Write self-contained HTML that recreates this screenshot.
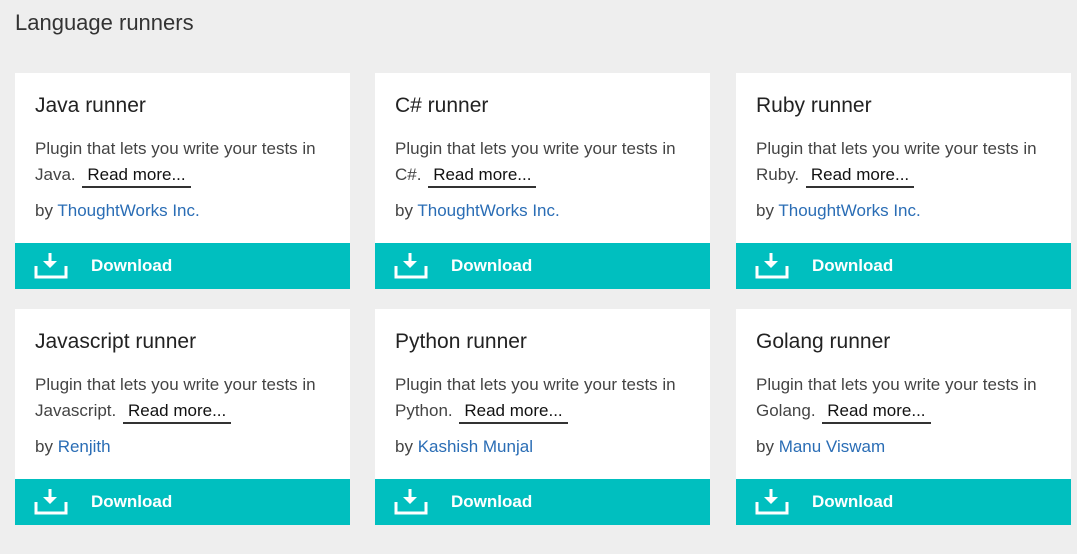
<!DOCTYPE html>
<html><head><style>
body{margin:0;background:#eeeeee;font-family:"Liberation Sans",sans-serif;width:1077px;height:554px;position:relative;overflow:hidden}
h1{position:absolute;left:15px;top:10px;margin:0;font-weight:normal;font-size:22px;color:#333}
.card{position:absolute;width:335px;height:216px;background:#fff}
.card h2{position:absolute;left:20px;top:21px;margin:0;font-weight:normal;font-size:21px;color:#222}
.card p{position:absolute;left:20px;top:63px;margin:0;font-size:17px;line-height:26px;color:#444;width:295px}
.card p a{color:#111;border-bottom:2px solid #333;padding:0 5px 2px;margin-left:2px}
.card .by{position:absolute;left:20px;top:128px;font-size:17px;color:#444}
.by span{color:#2a6db5}
.dl{position:absolute;left:0;bottom:0;width:335px;height:46px;background:#00bfbf;color:#fff;font-weight:bold;font-size:17px}
.dl svg{position:absolute;left:19px;top:8px}
.dl b{position:absolute;left:76px;top:13px}
</style></head><body>
<h1>Language runners</h1>

<div class="card" style="left:15px;top:73px"><h2>Java runner</h2><p>Plugin that lets you write your tests in Java. <a>Read more...</a></p><div class="by">by <span>ThoughtWorks Inc.</span></div><div class="dl"><svg width="36" height="30"><path d="M2 15V26H32V15" fill="none" stroke="#fff" stroke-width="3"/><path d="M16 2V11" stroke="#fff" stroke-width="3"/><path d="M9 10H23L16 17Z" fill="#fff"/></svg><b>Download</b></div></div>

<div class="card" style="left:375px;top:73px"><h2>C# runner</h2><p>Plugin that lets you write your tests in C#. <a>Read more...</a></p><div class="by">by <span>ThoughtWorks Inc.</span></div><div class="dl"><svg width="36" height="30"><path d="M2 15V26H32V15" fill="none" stroke="#fff" stroke-width="3"/><path d="M16 2V11" stroke="#fff" stroke-width="3"/><path d="M9 10H23L16 17Z" fill="#fff"/></svg><b>Download</b></div></div>

<div class="card" style="left:736px;top:73px"><h2>Ruby runner</h2><p>Plugin that lets you write your tests in Ruby. <a>Read more...</a></p><div class="by">by <span>ThoughtWorks Inc.</span></div><div class="dl"><svg width="36" height="30"><path d="M2 15V26H32V15" fill="none" stroke="#fff" stroke-width="3"/><path d="M16 2V11" stroke="#fff" stroke-width="3"/><path d="M9 10H23L16 17Z" fill="#fff"/></svg><b>Download</b></div></div>

<div class="card" style="left:15px;top:309px"><h2>Javascript runner</h2><p>Plugin that lets you write your tests in Javascript. <a>Read more...</a></p><div class="by">by <span>Renjith</span></div><div class="dl"><svg width="36" height="30"><path d="M2 15V26H32V15" fill="none" stroke="#fff" stroke-width="3"/><path d="M16 2V11" stroke="#fff" stroke-width="3"/><path d="M9 10H23L16 17Z" fill="#fff"/></svg><b>Download</b></div></div>

<div class="card" style="left:375px;top:309px"><h2>Python runner</h2><p>Plugin that lets you write your tests in Python. <a>Read more...</a></p><div class="by">by <span>Kashish Munjal</span></div><div class="dl"><svg width="36" height="30"><path d="M2 15V26H32V15" fill="none" stroke="#fff" stroke-width="3"/><path d="M16 2V11" stroke="#fff" stroke-width="3"/><path d="M9 10H23L16 17Z" fill="#fff"/></svg><b>Download</b></div></div>

<div class="card" style="left:736px;top:309px"><h2>Golang runner</h2><p>Plugin that lets you write your tests in Golang. <a>Read more...</a></p><div class="by">by <span>Manu Viswam</span></div><div class="dl"><svg width="36" height="30"><path d="M2 15V26H32V15" fill="none" stroke="#fff" stroke-width="3"/><path d="M16 2V11" stroke="#fff" stroke-width="3"/><path d="M9 10H23L16 17Z" fill="#fff"/></svg><b>Download</b></div></div>
</body></html>
